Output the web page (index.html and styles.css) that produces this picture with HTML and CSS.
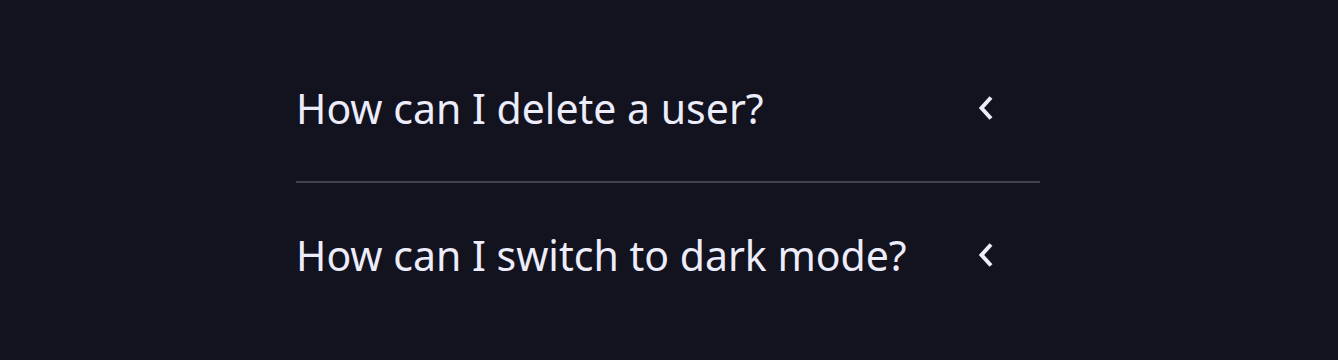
FILE: index.html
```html
<!DOCTYPE html>
<html lang="en">
<head>
<meta charset="utf-8">
<title>FAQ</title>
<link rel="stylesheet" href="styles.css">
</head>
<body>
<main class="page">
  <section class="faq">
    <div class="faq-item">
      <span class="faq-question">How can I delete a user?</span>
      <span class="faq-toggle">
        <svg width="24" height="24" viewBox="0 0 24 24" fill="none" stroke="currentColor" stroke-width="4" stroke-linejoin="miter"><path d="M18 1.5 L8.5 12 L18 22.5"/></svg>
      </span>
    </div>
    <div class="faq-item">
      <span class="faq-question">How can I switch to dark mode?</span>
      <span class="faq-toggle">
        <svg width="24" height="24" viewBox="0 0 24 24" fill="none" stroke="currentColor" stroke-width="4" stroke-linejoin="miter"><path d="M18 1.5 L8.5 12 L18 22.5"/></svg>
      </span>
    </div>
  </section>
</main>
</body>
</html>
```
FILE: styles.css
```css
* { box-sizing: border-box; }
html, body { margin: 0; padding: 0; }
body {
  background: #13121f;
  color: #ececfb;
  font-family: "Noto Sans", sans-serif;
  width: 1338px;
  height: 360px;
  overflow: hidden;
}
.page {
  display: flex;
  justify-content: center;
  padding-top: 35px;
}
.faq {
  width: 744px;
  margin-left: -2px;
  display: flex;
  flex-direction: column;
}
.faq-item {
  height: 146px;
  display: flex;
  align-items: center;
  justify-content: space-between;
  padding-right: 43px;
}
.faq-item + .faq-item {
  border-top: 2px solid #41404f;
}
.faq-question {
  font-size: 41px;
  line-height: 1;
  letter-spacing: 0;
}
.faq-toggle {
  display: flex;
  width: 24px;
  height: 24px;
}
```
